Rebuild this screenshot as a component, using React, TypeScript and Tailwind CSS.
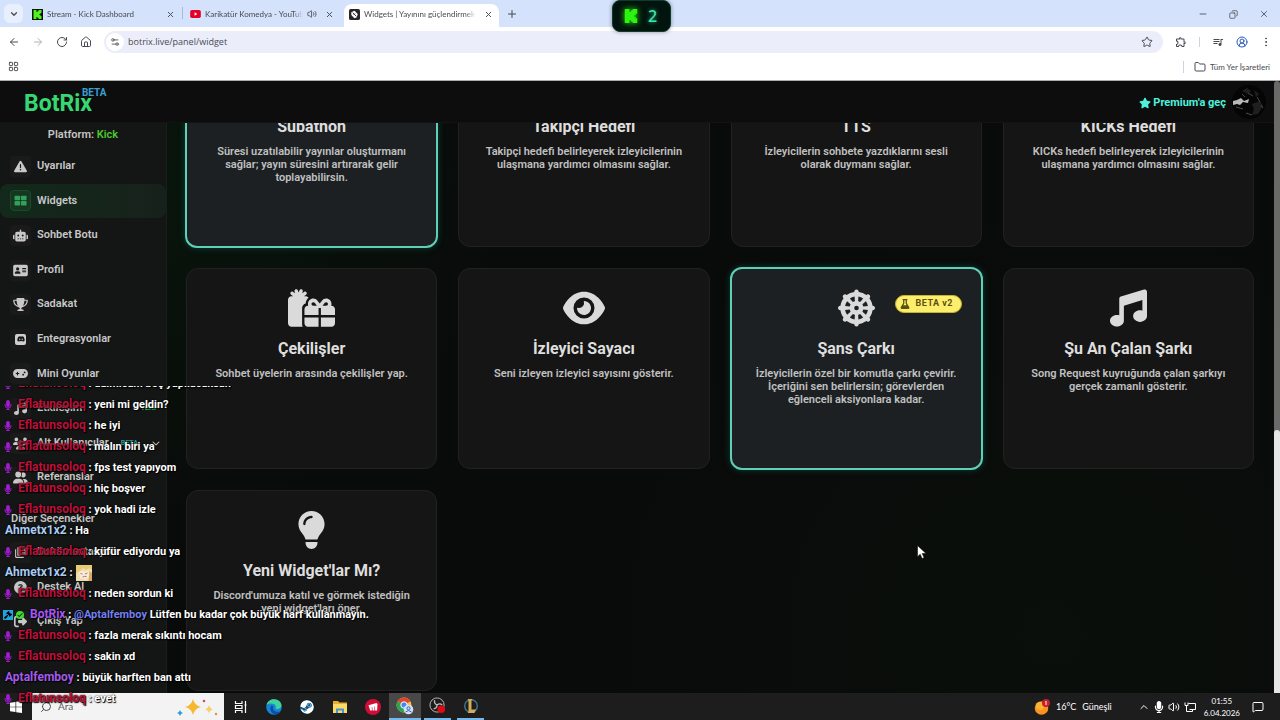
import React from "react";
import {
  FaTriangleExclamation, FaRobot, FaAddressCard, FaTrophy, FaGamepad, FaMusic, FaUsers, FaUserGroup,
  FaCircleQuestion, FaRightFromBracket, FaGifts, FaEye, FaDharmachakra, FaLightbulb, FaFlask,
  FaStar, FaMicrophone, FaDiscord, FaChevronDown, FaClock, FaHeart, FaVolumeHigh, FaCoins, FaSteam, FaGavel, FaCheck,
} from "react-icons/fa6";
import { MdLibraryBooks, MdOutlineExtension, MdQueueMusic } from "react-icons/md";
import {
  ChevronDown, ChevronUp, X, Plus, Minus, ArrowLeft, ArrowRight, RotateCw, Star, Folder, EllipsisVertical,
  CircleUserRound, Volume2, Search, Settings2, LayoutGrid, House, MessageSquare, Copy,
} from "lucide-react";

const KickMark = ({ className }: { className: string }) => (
  <svg viewBox="0 0 24 24" className={className} fill="currentColor" aria-hidden="true">
    <path d="M1.333 0h8v5.333H12V2.667h2.667V0h8v8H20v2.667h-2.667v2.666H20V16h2.667v8h-8v-2.667H12v-2.666H9.333V24h-8Z" />
  </svg>
);

const PanelsIcon = ({ className }: { className?: string }) => (
  <svg viewBox="0 0 24 24" className={className} fill="currentColor" aria-hidden="true">
    <rect x="1" y="3" width="10.4" height="8.4" rx="1.4" />
    <rect x="12.8" y="3" width="10.4" height="8.4" rx="1.4" />
    <rect x="1" y="12.8" width="10.4" height="8.4" rx="1.4" />
    <rect x="12.8" y="12.8" width="10.4" height="8.4" rx="1.4" />
  </svg>
);

const DiscordTile = () => (
  <span className="grid size-[11px] place-items-center rounded-xs bg-[#cfcfcf] text-[#171717]">
    <FaDiscord className="size-2" />
  </span>
);

type IconType = React.ComponentType<{ className?: string }>;
type NavEntry = { label: string; icon: IconType; active?: boolean; tag?: string; tagClass?: string; chevron?: boolean };

const mainNav: NavEntry[] = [
  { label: "Uyarılar", icon: FaTriangleExclamation },
  { label: "Widgets", icon: PanelsIcon, active: true },
  { label: "Sohbet Botu", icon: FaRobot },
  { label: "Profil", icon: FaAddressCard },
  { label: "Sadakat", icon: FaTrophy },
  { label: "Entegrasyonlar", icon: DiscordTile },
  { label: "Mini Oyunlar", icon: FaGamepad },
  { label: "Etkileşim", icon: FaMusic, tag: "YENİ", tagClass: "ml-auto mr-1 text-[#22c55e]" },
  { label: "Alt Kullanıcılar", icon: FaUsers, tag: "BETA", tagClass: "ml-1.5 text-[#2c9c8f]", chevron: true },
  { label: "Referanslar", icon: FaUserGroup },
];

const otherNav: NavEntry[] = [
  { label: "Dokümantasyon", icon: MdLibraryBooks },
  { label: "Destek Al", icon: FaCircleQuestion },
  { label: "Çıkış Yap", icon: FaRightFromBracket },
];

function NavLink({ item }: { item: NavEntry }) {
  const Icon = item.icon;
  return (
    <a
      href="#"
      className={`flex flex-1 items-center gap-1.5 rounded-lg pl-2.5 pr-1.5 text-[11px] font-semibold whitespace-nowrap text-[#c8c8c8] ${
        item.active ? "bg-linear-to-r from-[#12291b] to-[#17211b]" : ""
      }`}
    >
      <span
        className={`grid size-[21px] shrink-0 place-items-center rounded-sm ${
          item.active ? "border border-[#1d4a2c] bg-[#15361f] text-[#32a05a]" : "bg-[#1a1a1a]"
        }`}
      >
        <Icon className="h-[13px] w-[15px]" />
      </span>
      {item.label}
      {item.tag && <span className={`text-[7px] font-bold ${item.tagClass}`}>{item.tag}</span>}
      {item.chevron && <FaChevronDown className="ml-auto size-2" />}
    </a>
  );
}

type Widget = { title: string; text: string; icon: IconType; iconClass: string; featured?: boolean; badge?: string };

const widgets: Widget[] = [
  { title: "Subathon", text: "Süresi uzatılabilir yayınlar oluşturmanı sağlar; yayın süresini artırarak gelir toplayabilirsin.", icon: FaClock, iconClass: "w-[38px]", featured: true },
  { title: "Takipçi Hedefi", text: "Takipçi hedefi belirleyerek izleyicilerinin ulaşmana yardımcı olmasını sağlar.", icon: FaHeart, iconClass: "w-[38px]" },
  { title: "TTS", text: "İzleyicilerin sohbete yazdıklarını sesli olarak duymanı sağlar.", icon: FaVolumeHigh, iconClass: "w-[38px]" },
  { title: "KICKs Hedefi", text: "KICKs hedefi belirleyerek izleyicilerinin ulaşmana yardımcı olmasını sağlar.", icon: FaCoins, iconClass: "w-[38px]" },
  { title: "Çekilişler", text: "Sohbet üyelerin arasında çekilişler yap.", icon: FaGifts, iconClass: "w-[47px]" },
  { title: "İzleyici Sayacı", text: "Seni izleyen izleyici sayısını gösterir.", icon: FaEye, iconClass: "w-[42px]" },
  { title: "Şans Çarkı", text: "İzleyicilerin özel bir komutla çarkı çevirir. İçeriğini sen belirlersin; görevlerden eğlenceli aksiyonlara kadar.", icon: FaDharmachakra, iconClass: "w-[37px]", featured: true, badge: "BETA v2" },
  { title: "Şu An Çalan Şarkı", text: "Song Request kuyruğunda çalan şarkıyı gerçek zamanlı gösterir.", icon: FaMusic, iconClass: "w-[37px]" },
  { title: "Yeni Widget'lar Mı?", text: "Discord'umuza katıl ve görmek istediğin yeni widget'ları öner.", icon: FaLightbulb, iconClass: "w-[37px]" },
];

function WidgetCard({ widget }: { widget: Widget }) {
  const Icon = widget.icon;
  return (
    <article
      className={`relative flex flex-col items-center rounded-xl px-5 pt-5 text-center ${
        widget.featured
          ? "-m-px border-2 border-[#5fd0b8] bg-[#1c2023] shadow-[0_0_6px_#0b3d33]"
          : "border border-[#212121] bg-[#151515]"
      }`}
    >
      <Icon className={`h-[38px] shrink-0 text-[#dadada] ${widget.iconClass}`} />
      <h2 className="mt-3 text-base leading-5 font-bold text-[#dedede]">{widget.title}</h2>
      <p className="mt-2 text-[11px] leading-[13px] font-semibold text-[#c0c0c0]">{widget.text}</p>
      {widget.badge && (
        <span className="absolute top-[26px] right-[19px] flex h-[18px] items-center gap-1.5 rounded-full border border-[#c9b22c] bg-[#fdee6c] pr-2 pl-1 text-[9px] font-bold tracking-wider text-[#5c5110]">
          <FaFlask className="size-2.5" />
          {widget.badge}
        </span>
      )}
    </article>
  );
}

type ChatLine = { name: string; text: React.ReactNode; color: string; mod?: boolean; bot?: boolean };
const red = "text-[#bd103b]";

const chat: ChatLine[] = [
  { name: "Eflatunsoloq", text: "dalmicam boş yapılacaksan", color: red, mod: true },
  { name: "Eflatunsoloq", text: "yeni mi geldin?", color: red, mod: true },
  { name: "Eflatunsoloq", text: "he iyi", color: red, mod: true },
  { name: "Eflatunsoloq", text: "malın biri ya", color: red, mod: true },
  { name: "Eflatunsoloq", text: "fps test yapıyom", color: red, mod: true },
  { name: "Eflatunsoloq", text: "hiç boşver", color: red, mod: true },
  { name: "Eflatunsoloq", text: "yok hadi izle", color: red, mod: true },
  { name: "Ahmetx1x2", text: "Ha", color: "text-[#a9cdf5]" },
  { name: "Eflatunsoloq", text: "küfür ediyordu ya", color: red, mod: true },
  { name: "Ahmetx1x2", text: <Emote />, color: "text-[#a9cdf5]" },
  { name: "Eflatunsoloq", text: "neden sordun ki", color: red, mod: true },
  { name: "BotRix", text: <><span className="text-[#7480f0]">@Aptalfemboy</span> Lütfen bu kadar çok büyük harf kullanmayın.</>, color: "text-[#a855f7]", bot: true },
  { name: "Eflatunsoloq", text: "fazla merak sıkıntı hocam", color: red, mod: true },
  { name: "Eflatunsoloq", text: "sakin xd", color: red, mod: true },
  { name: "Aptalfemboy", text: "büyük harften ban attı", color: "text-[#a45bea]" },
  { name: "Eflatunsoloq", text: "evet", color: red, mod: true },
];

function Emote() {
  return (
    <svg viewBox="0 0 16 16" className="ml-px inline-block size-4 align-middle" aria-label="emote">
      <rect width="16" height="16" fill="#f0dfae" />
      <path d="M0 0h16v5l-3-2-3 2-3-2-3 3-4 2z" fill="#e9cb70" />
      <path d="M3 7l3-1.500L9 7l3-1.500 1.500 2L13 12l-4 2.500L4 13z" fill="#fbe9dc" />
      <path d="M4.500 8.500l2 .5M9 9l2.500-1M6.500 12q2-1 4-.5" stroke="#93604e" strokeWidth=".8" fill="none" />
      <path d="M13.500 6 16 8v8h-3.500z" fill="#d9ab66" />
    </svg>
  );
}

function ChatOverlay() {
  return (
    <ul className="pointer-events-none absolute bottom-[11px] left-0 z-20 flex h-[323px] flex-col justify-end overflow-hidden text-[11px] font-bold whitespace-nowrap text-white [text-shadow:0_0_2px_#000,1px_1px_1px_#000]">
      {chat.map((line, i) => (
        <li key={i} className={`flex h-[21px] shrink-0 items-center ${line.mod || line.bot ? "pl-[3px]" : "pl-[5px]"}`}>
          {line.mod && <FaMicrophone className="mr-[5px] size-2.5 text-[#a21bd0]" />}
          {line.bot && (
            <>
              <span className="grid size-2.5 place-items-center bg-[#1fa5dd] text-black"><FaGavel className="size-2" /></span>
              <span className="mr-1.5 ml-[3px] grid size-2 place-items-center rounded-full bg-[#3ddc2f] text-black"><FaCheck className="size-1.5" /></span>
            </>
          )}
          <span>
            <span className={`text-xs ${line.color}`}>{line.name}</span> : {line.text}
          </span>
        </li>
      ))}
    </ul>
  );
}

function Tab({ title, icon, active, sound, width }: { title: string; icon: React.ReactNode; active?: boolean; sound?: boolean; width: string }) {
  return (
    <div className={`flex h-[23px] items-center px-[5px] pb-[3px] ${width} ${active ? "rounded-t-lg bg-white" : ""}`}>
      {icon}
      <span className="ml-1 min-w-0 flex-1 overflow-hidden mask-r-from-90% whitespace-nowrap">{title}</span>
      {sound && <Volume2 className="ml-1 size-2.5 shrink-0" />}
      <button aria-label="Sekmeyi kapat" className="ml-1.5 grid size-3 shrink-0 place-items-center">
        <X className="size-[9px]" strokeWidth={2.5} />
      </button>
    </div>
  );
}

function BrowserChrome() {
  return (
    <header className="shrink-0 border-b border-[#a9b0ae] bg-white font-['Lato','Noto_Sans',sans-serif] text-[#474a50]">
      <div className="flex h-[27px] items-end bg-[#d5e2fc] pl-1 text-[8px]">
        <button aria-label="Sekme ara" className="mb-1 grid size-[19px] place-items-center rounded-md bg-[#e9f0fd]">
          <ChevronDown className="size-2.5" strokeWidth={3} />
        </button>
        <Tab width="ml-1 w-[154px]" title="Stream - Kick Dashboard" icon={<span className="grid size-[11px] place-items-center bg-[#0d120c] text-[#4df51d]"><KickMark className="size-[9px]" /></span>} />
        <span className="mb-2 ml-px h-3 w-px bg-[#a9b8d6]" />
        <Tab width="ml-0.5 w-[155px]" title="Karikatür Komedya - YouTube" sound icon={
          <svg viewBox="0 0 12 9" className="h-2 w-[11px] shrink-0"><rect width="12" height="9" rx="2" fill="#e3002b" /><path d="M5 2.5 8 4.5 5 6.500z" fill="#fff" /></svg>
        } />
        <Tab width="ml-1 w-[155px]" active title="Widgets | Yayınını güçlendirmek" icon={
          <svg viewBox="0 0 12 12" className="size-[11px] shrink-0"><rect width="12" height="12" rx="2" fill="#25272b" /><path d="M2.500 3.500 6 2l3.500 3.500L8.500 9 6 10 2.500 6.500z" fill="#fff" /><path d="M4 4l4 4M5 6.500 6.500 5" stroke="#25272b" /></svg>
        } />
        <button aria-label="Yeni sekme" className="mb-[7px] ml-[7px] grid size-3 place-items-center"><Plus className="size-3" /></button>
        <div className="mb-2 ml-auto flex items-center gap-[21px] pr-[11px]">
          <button aria-label="Küçült"><Minus className="size-2.5" /></button>
          <button aria-label="Geri yükle"><Copy className="size-[9px] -scale-x-100" /></button>
          <button aria-label="Kapat"><X className="size-2.5" /></button>
        </div>
      </div>
      <div className="flex h-[30px] items-center gap-3 pr-2 pl-2 text-[10px]">
        <button aria-label="Geri"><ArrowLeft className="size-3" /></button>
        <button aria-label="İleri"><ArrowRight className="size-3 text-[#b0b2b5]" /></button>
        <button aria-label="Yenile"><RotateCw className="size-3" /></button>
        <button aria-label="Ana sayfa"><House className="size-3" /></button>
        <div className="flex h-[22px] min-w-0 flex-1 items-center rounded-full bg-[#ebeefa] pr-2.5 pl-0.5">
          <span className="grid size-[18px] place-items-center rounded-full bg-white"><Settings2 className="size-2.5" /></span>
          <input aria-label="Adres çubuğu" defaultValue="botrix.live/panel/widget" className="min-w-0 flex-1 bg-transparent pl-1 font-['Open_Sans','Noto_Sans',sans-serif] text-[9px] outline-none" />
          <button aria-label="Yer işareti ekle"><Star className="size-3" /></button>
        </div>
        <div className="flex items-center gap-3">
          <button aria-label="Uzantılar"><MdOutlineExtension className="size-3" /></button>
          <span className="h-2.5 w-px bg-[#cdd3e0]" />
          <button aria-label="Medya"><MdQueueMusic className="size-3" /></button>
          <button aria-label="Profil" className="text-[#2b5bb5]"><CircleUserRound className="size-3" /></button>
          <button aria-label="Menü"><EllipsisVertical className="size-3" /></button>
        </div>
      </div>
      <div className="flex h-[23px] items-center justify-between pr-2.5 pb-1 pl-2 text-[8px]">
        <button aria-label="Uygulamalar"><LayoutGrid className="size-[11px]" /></button>
        <button className="flex items-center gap-1 border-l border-[#cdd3e0] pl-2.5">
          <Folder className="size-3" /> Tüm Yer İşaretleri
        </button>
      </div>
    </header>
  );
}

function Taskbar() {
  return (
    <footer className="flex h-[27px] shrink-0 items-stretch bg-[#1d1d1d] font-['Lato','Noto_Sans',sans-serif] text-white">
      <button aria-label="Başlat" className="grid w-8 place-items-center">
        <svg viewBox="0 0 12 12" className="size-3" fill="#fff"><path d="M0 1.700 5.500.9v4.800H0zM6.200.8 12 0v5.700H6.200zM0 6.300h5.500v4.800L0 10.300zM6.200 6.300H12V12l-5.800-.8z" /></svg>
      </button>
      <label className="flex w-48 items-center gap-1.5 bg-[#f3f3f3] pr-1.5 pl-2 text-[#4a4a4a]">
        <Search className="size-3 -scale-x-100" />
        <input aria-label="Ara" placeholder="Ara" className="w-0 flex-1 text-[10px] outline-none placeholder:text-[#5c5c5c]" />
        <svg viewBox="0 0 42 18" className="h-[18px] w-[42px]" aria-hidden="true">
          <path d="M17 1q1.500 6.500 8 8-6.500 1.500-8 8-1.500-6.500-8-8 6.500-1.500 8-8z" fill="#f5b82e" />
          <path d="M33 7q.8 3.400 4 4.200-3.200.8-4 4.200-.8-3.400-4-4.200 3.200-.8 4-4.200z" fill="#f7cf62" />
          <path d="M4 12q.6 2.400 3 3-2.400.6-3 3-.6-2.400-3-3 2.400-.6 3-3z" fill="#2c9ad6" />
          <circle cx="28" cy="3" r="1.300" fill="#d7495c" /><circle cx="40" cy="16" r="1.200" fill="#c9974a" />
        </svg>
      </label>
      <div className="flex">
        <button aria-label="Görev görünümü" className="grid w-[33px] place-items-center">
          <svg viewBox="0 0 14 14" className="size-3.5" fill="none" stroke="#fff" strokeWidth="1.200"><path d="M1.500 1v2.500h6.500V1M1.500 13v-2.500h6.500V13M1.500 5.500h6.500v3H1.500zM11.500 1v12M10.500 5h2" /></svg>
        </button>
        <button aria-label="Edge" className="grid w-[33px] place-items-center">
          <svg viewBox="0 0 16 16" className="size-4"><circle cx="8" cy="8" r="7.800" fill="#1685d8" /><path d="M.6 6C2-.5 11-1.500 14.500 3.500c2.500 4-.5 7-4 6.500-1.500-.3-.5-1.200-.6-2.200C9.500 4.500 4 3.500.6 6z" fill="#42d39a" /><path d="M5.500 6.500c-2.500 3-1 8 4 9 2.500-.3 4-1.500 5.200-3.200-4 1.700-9-.5-7.500-5z" fill="#0c4ea2" /></svg>
        </button>
        <button aria-label="Steam" className="grid w-[33px] place-items-center"><FaSteam className="size-3.5 rounded-full bg-[#14598c]" /></button>
        <button aria-label="Dosya Gezgini" className="grid w-[33px] place-items-center">
          <svg viewBox="0 0 16 14" className="h-3.5 w-4"><path d="M1 1h5l1.500 1.500H15V13H1z" fill="#e9ad2c" /><path d="M1 4h14v9H1z" fill="#fbd968" /><path d="M4 13V8.500h8V13h-2v-2.500H6V13z" fill="#4a94d4" /></svg>
        </button>
        <button aria-label="Riot" className="grid w-[33px] place-items-center">
          <svg viewBox="0 0 16 16" className="size-4"><circle cx="8" cy="8" r="8" fill="#d10d37" /><path d="M3.500 6.200 11.500 4l1 1-.4 6.500h-2L10 7.500h-.6l.1 4H7.600l-.3-3.500h-.6l.3 3.500H5.200z" fill="#fff" /></svg>
        </button>
        <button aria-label="Chrome" className="grid w-8 place-items-center border-b-2 border-[#76b9ed] bg-[#484848]">
          <svg viewBox="0 0 18 18" className="size-[18px]"><circle cx="8" cy="8" r="7.500" fill="#f6c52c" /><path d="M8 8 1.500 4.200A7.500 7.500 0 0 1 14.500 4.300z" fill="#e14335" /><path d="M8 8 1.500 4.200A7.500 7.500 0 0 0 8 15.500l3-5z" fill="#31a350" /><circle cx="8" cy="8" r="3.200" fill="#4285f4" stroke="#fff" /><circle cx="12.500" cy="12.500" r="4.800" fill="#cfe0fb" /><circle cx="12.500" cy="11.300" r="1.500" fill="none" stroke="#3763b5" /><path d="M9.500 15q3-3 6 0" fill="none" stroke="#3763b5" /></svg>
        </button>
        <button aria-label="OBS" className="mx-[3px] grid w-[27px] place-items-center border-b-2 border-[#76b9ed]">
          <svg viewBox="0 0 18 18" className="size-[17px]"><circle cx="8.500" cy="8.500" r="7.500" fill="#1d1d1d" stroke="#bdbdbd" /><path d="M8.500 8.500Q5 7 6 3.500M8.500 8.500q3-2.500 5.500 0M8.500 8.500Q8.500 12 5 12.500" fill="none" stroke="#bdbdbd" strokeWidth="1.400" /><circle cx="13" cy="13" r="4" fill="#e00914" /></svg>
        </button>
        <button aria-label="League of Legends" className="mx-[3px] grid w-[27px] place-items-center border-b-2 border-[#76b9ed]">
          <svg viewBox="0 0 16 16" className="size-4"><circle cx="8" cy="8" r="6.300" fill="none" stroke="#3d7582" strokeWidth="1.500" /><path d="M4.500 1h5l-1 1.500v9h4.500L11.500 15h-7l1-1.500v-11z" fill="#d2ab5c" /></svg>
        </button>
      </div>
      <div className="ml-auto flex items-center text-[9px]">
        <svg viewBox="0 0 16 16" className="mr-1.5 size-4" aria-hidden="true"><circle cx="7.500" cy="9" r="6.800" fill="#f7931e" /><circle cx="6" cy="7" r="4" fill="#fbb336" /><circle cx="12" cy="4" r="4" fill="#c4202b" /><path d="M12 2v4" stroke="#fff" /></svg>
        <span className="mr-1.5">16°C</span>
        <span className="mr-[26px]">Güneşli</span>
        <ChevronUp className="mr-[3px] size-3" />
        <FaMicrophone className="mr-[3px] size-3" />
        <Volume2 className="mr-1 size-3" />
        <svg viewBox="0 0 12 12" className="mr-2 size-3" fill="none" stroke="#fff" aria-hidden="true"><path d="M4.500 2.500h7v6h-6M1 1.500v3h3v-3M2.500 4.500v6h6M8.500 8.500v2" /></svg>
        <div className="mr-3 text-center text-[8px] leading-3">
          <div>01:55</div>
          <div>6.04.2026</div>
        </div>
        <MessageSquare className="mr-4 size-3" />
      </div>
    </footer>
  );
}

export default function App() {
  return (
    <div className="relative flex h-screen flex-col overflow-hidden bg-[#090a0a] font-['Roboto',sans-serif]">
      <BrowserChrome />

      <div className="flex min-h-0 flex-1">
        <div className="flex min-w-0 flex-1 flex-col">
          <div className="flex h-[42px] shrink-0 items-center justify-between border-b border-[#131313] bg-[#0d0d0d] pr-2 pl-6">
            <a href="#" className="flex items-start pt-1 text-[23px] leading-none font-bold text-[#35d873]">
              BotRix<span className="-mt-1 -ml-2.5 text-[10px] leading-none font-bold text-[#3b9fd1]">BETA</span>
            </a>
            <div className="flex items-center gap-1.5">
              <a href="#" className="flex items-center gap-0.5 pt-0.5 text-[11px] leading-none font-bold text-[#4ff0dc]">
                <FaStar className="size-3" /> Premium'a geç
              </a>
              <svg viewBox="0 0 34 34" className="size-[34px]" aria-label="Profil resmi">
                <circle cx="17" cy="17" r="17" fill="#050505" />
                <path d="M10 6l5-3 4 3-3 3zM22 5l5 4-3 3zM20 19l8-3 3 5-5 8-6 1 2-6z" fill="#1f1f1f" />
                <path d="M1 16l4-1 4-2 3 3 5-2-1 4-5-1-3 3-3-1-4 1z" fill="#b9b9b9" />
                <path d="M4 22l7 2M16 8l5 3M25 12l3 5M14 28l6 2M10 9l3 3M29 20l2 3" stroke="#4a4a4a" />
              </svg>
            </div>
          </div>

          <div className="flex min-h-0 flex-1">
            <aside className="flex w-[167px] shrink-0 flex-col border-r border-[#1b1f1c] bg-[#141515]">
              <p className="flex h-[26px] shrink-0 items-center justify-center pb-1 text-[11px] leading-none font-semibold text-[#c4c4c4]">
                Platform:&nbsp;<span className="text-[#4cc52f]">Kick</span>
              </p>
              <nav aria-label="Panel" className="flex h-[346px] shrink-0 flex-col">
                {mainNav.map((item) => <NavLink key={item.label} item={item} />)}
              </nav>
              <h3 className="flex h-10 shrink-0 items-center pt-2 pl-[11px] text-[11px] font-semibold text-[#c4c4c4]">Diğer Seçenekler</h3>
              <nav aria-label="Diğer" className="flex h-[104px] shrink-0 flex-col">
                {otherNav.map((item) => <NavLink key={item.label} item={item} />)}
              </nav>
            </aside>

            <main className="flex min-w-0 flex-1 flex-col justify-end overflow-hidden bg-[radial-gradient(circle_at_0%_10%,#08150c,transparent_30%),radial-gradient(circle_at_80%_90%,#0a0f0b,transparent_50%)] pr-5 pb-0.5 pl-[19px]">
              <div className="grid shrink-0 auto-rows-[201px] grid-cols-4 gap-[21px]">
                {widgets.map((w) => <WidgetCard key={w.title} widget={w} />)}
              </div>
            </main>
          </div>
        </div>
        <div className="flex w-1.5 shrink-0 flex-col justify-end rounded-t-full bg-[#6a6a68]">
          <div className="h-[43%] rounded-t-full bg-[#e6e6e6]" />
        </div>
      </div>

      <Taskbar />
      <ChatOverlay />

      <div className="absolute top-0 left-1/2 z-30 -ml-7 flex h-8 w-[59px] items-center justify-center gap-2.5 rounded-lg border border-[#0b3d2c] bg-[#03130d] pr-0.5 shadow-[0_0_4px_#0006]">
        <KickMark className="size-3.5 text-[#2cf30f] drop-shadow-[0_0_3px_#2cf30f]" />
        <span className="font-['Noto_Sans',sans-serif] text-base leading-none font-medium text-[#3fe6b0] [text-shadow:0_0_4px_#1fbf8c]">2</span>
      </div>

      <svg viewBox="0 0 10 14" className="absolute top-[545px] left-[917px] z-30 h-3.5 w-2.5" aria-hidden="true">
        <path d="M.5.5v11.200l2.700-2.500 1.900 4.300 2-.9-1.900-4.100H9z" fill="#fff" stroke="#111" strokeWidth=".6" />
      </svg>
    </div>
  );
}
